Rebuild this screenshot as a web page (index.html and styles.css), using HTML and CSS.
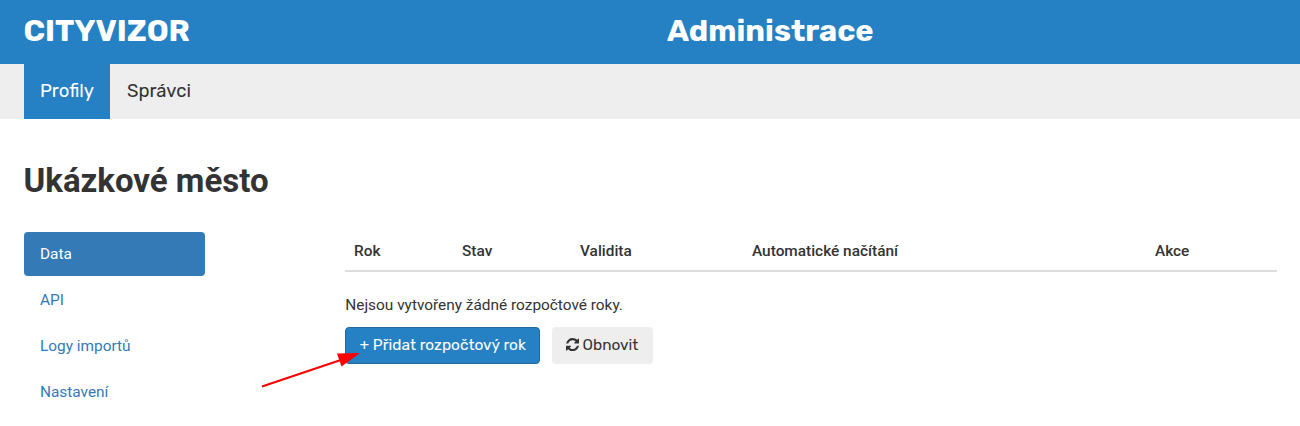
FILE: index.html
```html
<!DOCTYPE html>
<html lang="cs">
<head>
<meta charset="utf-8">
<title>CITYVIZOR – Administrace</title>
<link rel="stylesheet" href="styles.css">
</head>
<body>
<header class="topbar">
  <div class="topbar-cell">CITYVIZOR</div>
  <div class="topbar-cell">Administrace</div>
</header>
<nav class="tabs">
  <a class="tab tab-active">Profily</a>
  <a class="tab">Správci</a>
</nav>
<main class="content">
  <h1 class="title">Ukázkové město</h1>
  <div class="columns">
    <ul class="menu">
      <li class="menu-item menu-active">Data</li>
      <li class="menu-item">API</li>
      <li class="menu-item">Logy importů</li>
      <li class="menu-item">Nastavení</li>
    </ul>
    <section class="panel">
      <div class="table-head">
        <span>Rok</span><span>Stav</span><span>Validita</span><span>Automatické načítání</span><span>Akce</span>
      </div>
      <p class="empty">Nejsou vytvořeny žádné rozpočtové roky.</p>
      <div class="actions">
        <button class="btn btn-primary">+ Přidat rozpočtový rok</button>
        <button class="btn btn-default"><svg class="icon" viewBox="0 0 1536 1536"><path fill="currentColor" d="M1511 928q0 5-1 7-64 268-268 434.500T764 1536q-146 0-282.500-55T238 1324l-129 129q-19 19-45 19t-45-19-19-45V960q0-26 19-45t45-19h448q26 0 45 19t19 45-19 45l-137 137q71 66 161 102t187 36q134 0 250-65t186-179q11-17 53-117 8-23 30-23h192q13 0 22.500 9.500t9.500 22.500zm25-800v448q0 26-19 45t-45 19h-448q-26 0-45-19t-19-45 19-45l138-138Q969 256 768 256q-134 0-250 65T332 500q-11 17-53 117-8 23-30 23H50q-13 0-22.500-9.500T18 608v-7q65-268 270-434.500T768 0q146 0 284 55.500T1297 212l130-129q19-19 45-19t45 19 19 45z"/></svg>Obnovit</button>
      </div>
    </section>
  </div>
</main>
<svg class="pointer" width="104" height="44" viewBox="0 0 104 44"><path d="M4 38.500 82 12.300" stroke="#f00" stroke-width="2"/><path d="M79 5.500 102 5 83.500 18.500Z" fill="#f00"/></svg>
</body>
</html>
```
FILE: styles.css
```css
* { box-sizing: border-box; }
body {
  position: relative;
  margin: 0;
  height: 426px;
  overflow: hidden;
  background: #fff;
  color: #333;
  font: 15.4px/22px Roboto, sans-serif;
}
.topbar {
  display: grid;
  grid-template-columns: 643.5px 1fr;
  height: 64px;
  padding: 0 24px 0 23.5px;
  align-items: center;
  background: #2581c4;
  color: #fff;
  font: 700 30.8px/60px Rubik, Roboto, sans-serif;
}
.topbar-cell { height: 62px; }
.tabs {
  display: flex;
  height: 55px;
  padding-left: 24px;
  background: #eee;
  font: 18.48px/54px Rubik, Roboto, sans-serif;
}
.tab { padding-left: 16px; width: 87px; white-space: nowrap; }
.tab-active { width: 86px; background: #2581c4; color: #fff; }
.tab + .tab { padding-left: 17px; }
.content { padding: 40px 23px 0 24px; }
.title { margin: 0 0 0 -0.5px; font-size: 33px; line-height: 44px; font-weight: 700; }
.columns { display: flex; gap: 140px; margin-top: 29px; }
.menu {
  display: flex;
  flex-direction: column;
  gap: 2px;
  width: 181px;
  margin: 0;
  padding: 0;
  list-style: none;
}
.menu-item { height: 44px; padding: 11px 16px; color: #337ab7; border-radius: 4px; }
.menu-active { background: #337ab7; color: #fff; }
.panel { width: 932px; }
.table-head {
  display: grid;
  grid-template-columns: 108px 118px 172px 403px 1fr;
  height: 40px;
  padding: 8px 9px 0;
  border-bottom: 2px solid #ddd;
  font-weight: 500;
}
.empty { margin: 22px 0 11px 0.3px; }
.actions { display: flex; gap: 12px; }
.btn {
  display: flex;
  align-items: center;
  height: 37px;
  padding: 0 0 1px;
  border: 0;
  border-radius: 4px;
  font: 15.4px/22px Rubik, Roboto, sans-serif;
  white-space: nowrap;
}
.btn-primary { width: 195px; padding-left: 13.5px; border: 1px solid #2069a0; background: #2581c4; color: #fff; }
.btn-default { width: 101px; padding-left: 14px; background: #eee; color: #333; }
.icon { width: 13.2px; height: 13.2px; margin: -1px 3.400px 0 0; }
.pointer { position: absolute; left: 258px; top: 348px; }
```
